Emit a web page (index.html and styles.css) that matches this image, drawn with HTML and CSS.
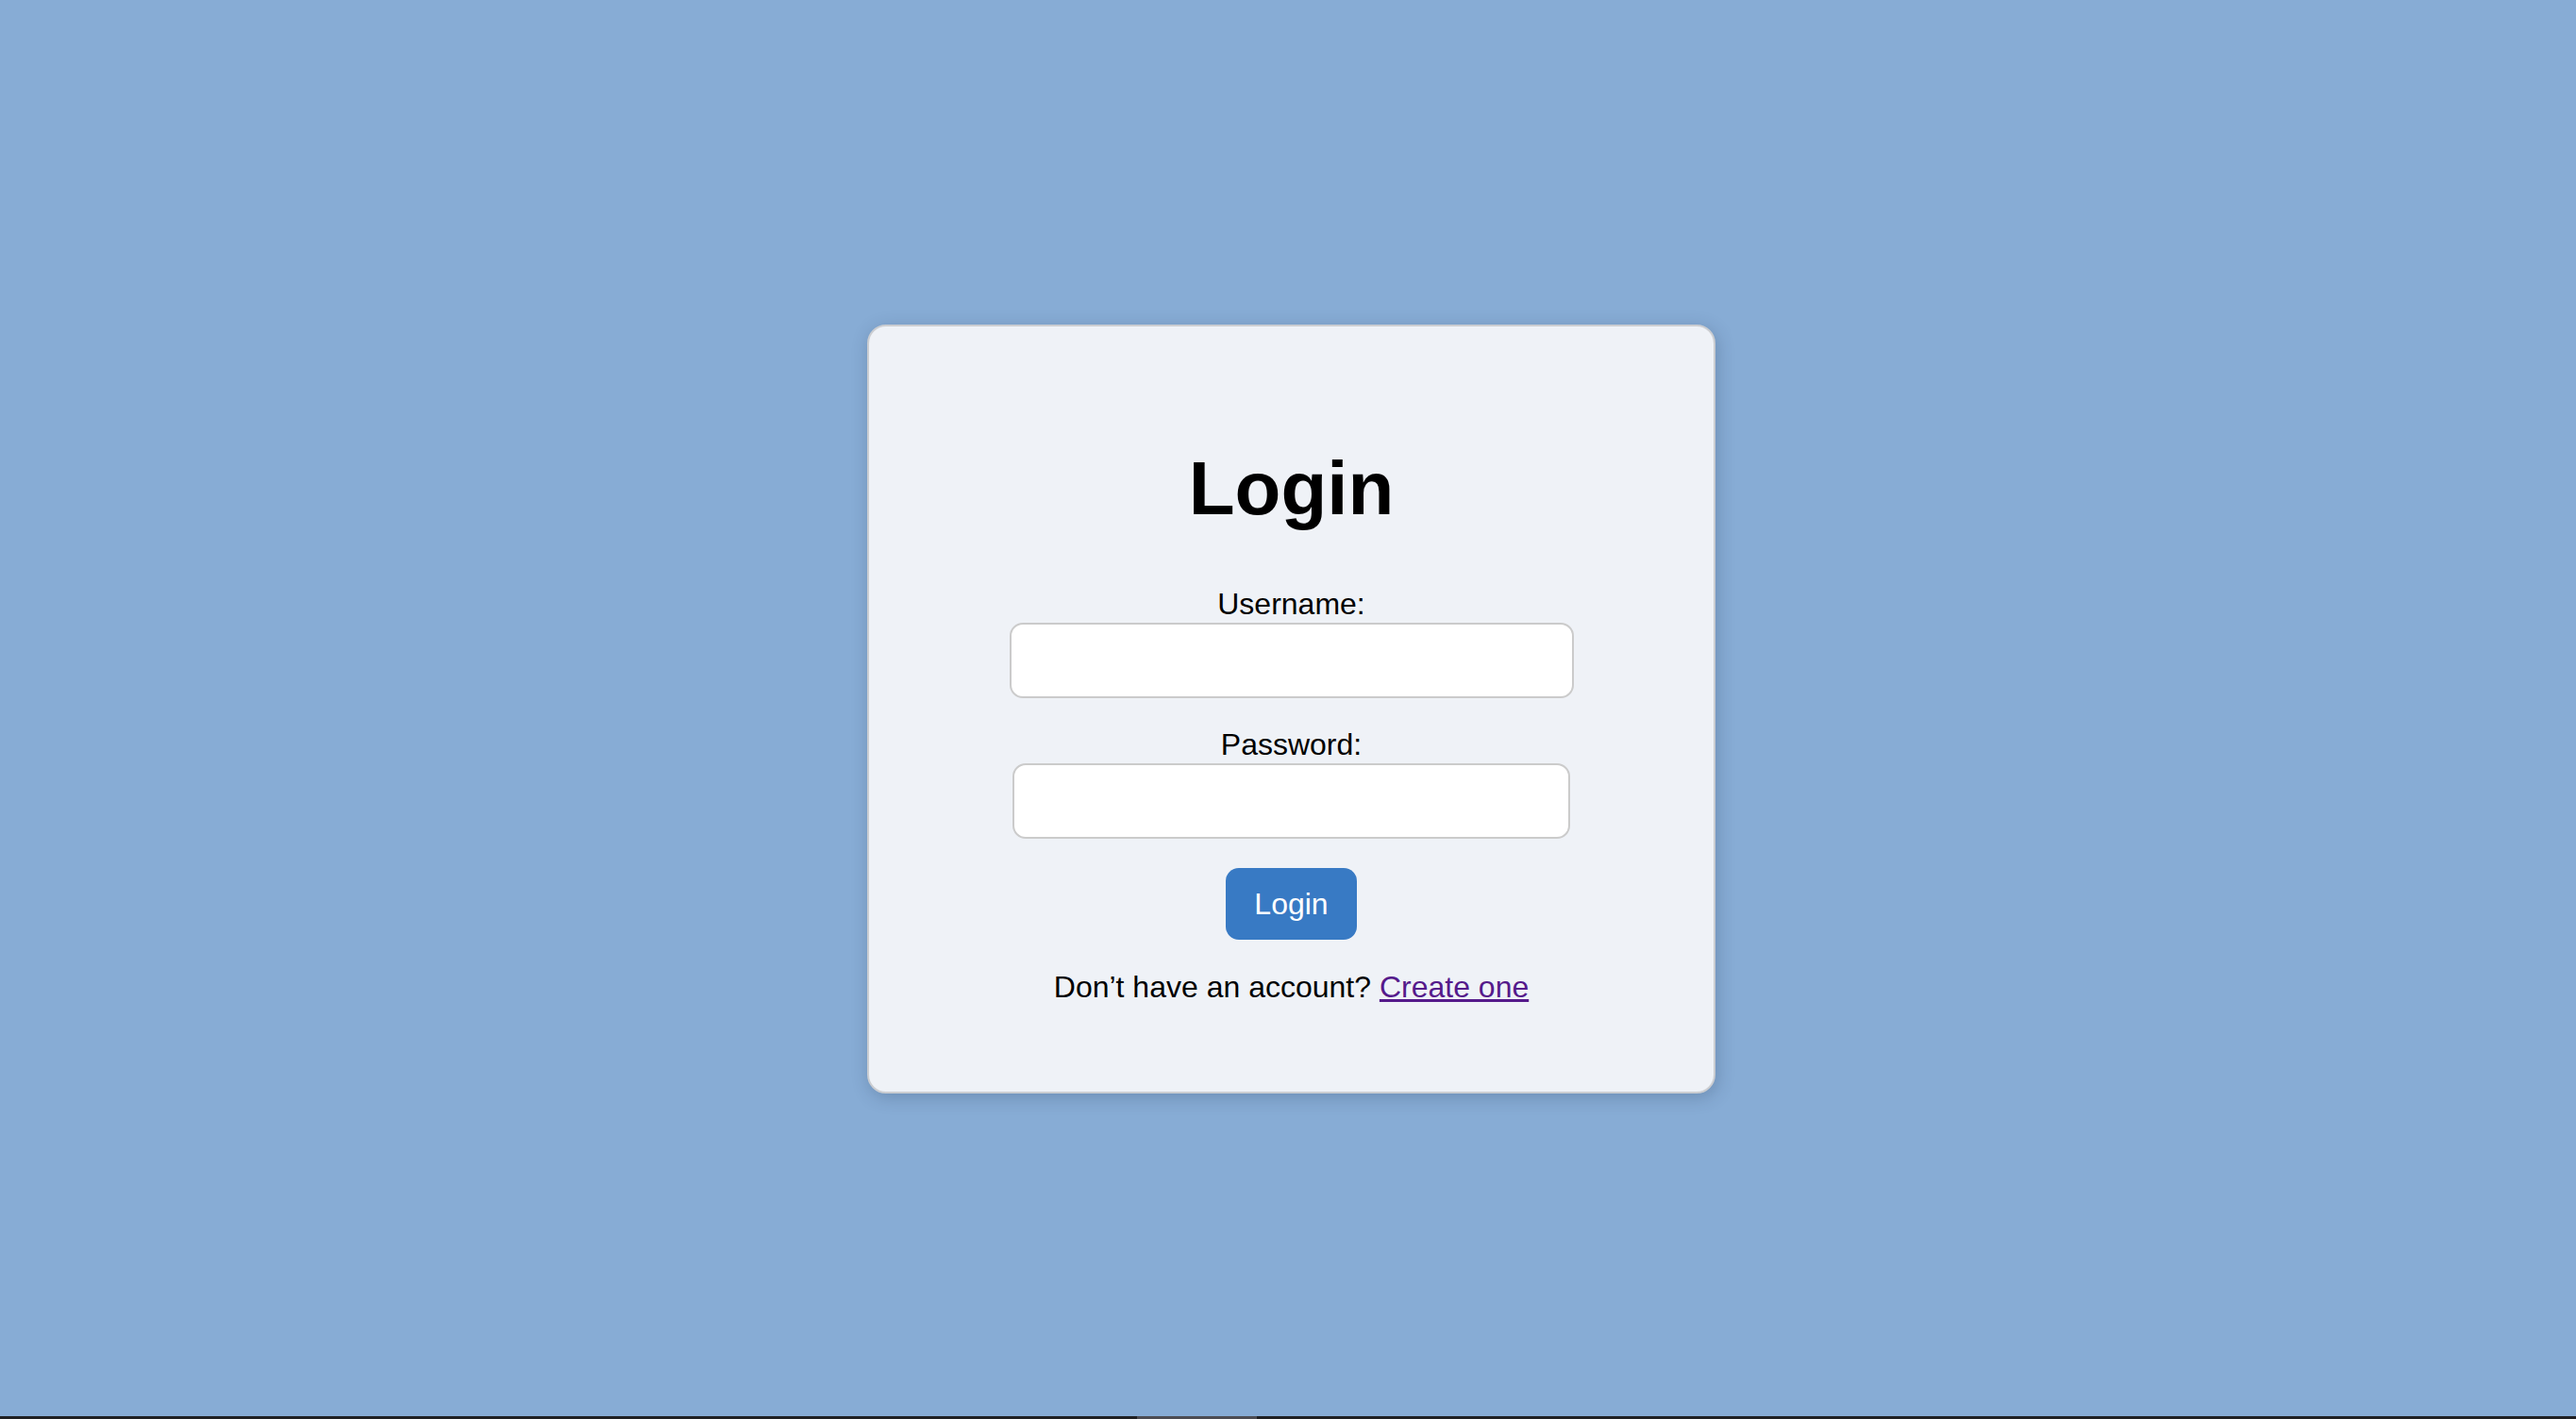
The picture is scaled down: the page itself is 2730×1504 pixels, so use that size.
FILE: index.html
```html
<!DOCTYPE html>
<html lang="en">
<head>
    <meta charset="UTF-8">
    <meta name="viewport" content="width=device-width, initial-scale=1.0">
    <title>Login</title>
    <link rel="stylesheet" href="styles.css">
</head>
<body>
    <div class="login-container">
        <h1>Login</h1>
        <form id="loginForm">
            <label for="username">Username:</label>
            <input type="text" id="username" name="username" class="username-input">
            <label for="password">Password:</label>
            <input type="password" id="password" name="password" class="password-input">
            <button type="submit">Login</button>
        </form>
        <p class="signup">Don’t have an account? <a href="#register" class="signup-link">Create one</a></p>
    </div>
    <div class="scroll-track"><div class="scroll-thumb"></div></div>
</body>
</html>
```

FILE: styles.css
```css
html, body {
    height: 100%;
}
body {
    margin: 0;
    font-family: "Liberation Sans", Arial, sans-serif;
    font-size: 32px;
    background-color: #87acd5;
    display: flex;
    align-items: center;
    justify-content: center;
}
.login-container {
    box-sizing: border-box;
    width: 899px;
    height: 815px;
    margin: -1px 0 0 7px;
    padding: 126px 0 0;
    background-color: #eff2f7;
    border: 2px solid #cbcdd1;
    border-radius: 20px;
    box-shadow: 2px 4px 18px rgba(30, 50, 80, 0.25);
    text-align: center;
}
h1 {
    margin: 0 0 58px;
    font-size: 80px;
    font-weight: bold;
    line-height: 92px;
    color: #000;
}
form {
    display: flex;
    flex-direction: column;
    align-items: center;
}
label {
    display: block;
    line-height: 37px;
    color: #000;
}
input {
    box-sizing: border-box;
    height: 80px;
    margin: 1px 0 31px;
    padding: 20px;
    font-family: inherit;
    font-size: 32px;
    background-color: #fff;
    border: 2px solid #cbcbcb;
    border-radius: 14px;
}
.username-input {
    width: 598px;
}
.password-input {
    width: 591px;
}
button {
    height: 76px;
    padding: 0 30px;
    font-family: inherit;
    font-size: 32px;
    color: #fff;
    background-color: #387ac4;
    border: none;
    border-radius: 14px;
    cursor: pointer;
}
.signup {
    margin: 32px 0 0;
    line-height: 37px;
    color: #000;
}
.signup-link {
    color: #551a8b;
}
.scroll-track {
    position: fixed;
    left: 0;
    right: 0;
    bottom: 0;
    height: 3px;
    background-color: #1f1f22;
}
.scroll-thumb {
    position: absolute;
    left: 1205px;
    top: 0;
    width: 127px;
    height: 3px;
    background-color: #4c4c52;
}
```
